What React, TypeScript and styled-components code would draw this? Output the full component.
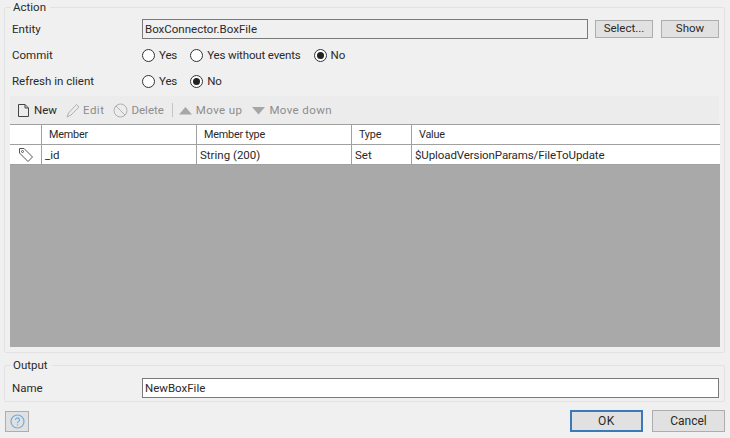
import React from 'react';
import styled, { createGlobalStyle } from 'styled-components';

const GlobalStyle = createGlobalStyle`
  html, body {
    margin: 0;
    padding: 0;
    background: #f0f0f0;
  }
  body {
    font-family: Roboto, 'Open Sans', 'Liberation Sans', sans-serif;
    font-size: 11.5px;
    color: #2a2a2a;
  }
`;

const Dialog = styled.div`
  width: 730px;
  height: 438px;
  box-sizing: border-box;
  padding: 0 5px 0 4px;
  display: flex;
  flex-direction: column;
  overflow: hidden;
`;

const Group = styled.fieldset<{ $height: number; $top: number }>`
  margin: ${(p) => p.$top}px 0 0;
  padding: 0 5px;
  height: ${(p) => p.$height}px;
  flex: none;
  box-sizing: border-box;
  border: 1px solid #e2e2e2;
  border-radius: 2px;
  min-width: 0;

  legend {
    margin-left: 1px;
    padding: 0 4px 0 2px;
    height: 14px;
    line-height: 14px;
  }
`;

const Row = styled.div<{ $height: number; $top?: number }>`
  display: flex;
  align-items: center;
  height: ${(p) => p.$height}px;
  margin-top: ${(p) => p.$top ?? 0}px;
`;

const Label = styled.div`
  width: 132px;
  flex: none;
  padding-left: 2px;
  box-sizing: border-box;
`;

const TextBox = styled.div<{ $readOnly?: boolean }>`
  flex: 1;
  height: 20px;
  box-sizing: border-box;
  border: 1px solid #7a7a7a;
  background: ${(p) => (p.$readOnly ? '#f0f0f0' : '#fff')};
  line-height: 18px;
  padding-left: 2px;
`;

const SmallButton = styled.div<{ $width: number; $gap: number }>`
  width: ${(p) => p.$width}px;
  margin-left: ${(p) => p.$gap}px;
  height: 18px;
  flex: none;
  box-sizing: border-box;
  border: 1px solid #adadad;
  background: #e1e1e1;
  text-align: center;
  line-height: 15px;
`;

const RadioRow = styled.div`
  display: flex;
  align-items: center;
  letter-spacing: -0.15px;
`;

const Radio = styled.span<{ $checked?: boolean; $gap: number }>`
  width: 13px;
  height: 13px;
  box-sizing: border-box;
  border: 1px solid #333;
  border-radius: 50%;
  background: #fff;
  margin-right: 4px;
  margin-left: ${(p) => p.$gap}px;
  display: flex;
  align-items: center;
  justify-content: center;

  &::after {
    content: '';
    width: 7px;
    height: 7px;
    border-radius: 50%;
    background: ${(p) => (p.$checked ? '#222' : 'transparent')};
  }
`;

const Toolbar = styled.div`
  height: 28px;
  margin-top: 2px;
  padding-left: 7px;
  background: #ececec;
  display: flex;
  align-items: center;
`;

const ToolItem = styled.div<{ $disabled?: boolean; $gap?: number; $iconGap?: number; $spacing?: number }>`
  display: flex;
  align-items: center;
  gap: ${(p) => p.$iconGap ?? 3}px;
  margin-left: ${(p) => p.$gap ?? 0}px;
  color: ${(p) => (p.$disabled ? '#8d8d8d' : '#2a2a2a')};
  letter-spacing: ${(p) => p.$spacing ?? 0}px;
`;

const ToolDivider = styled.span`
  width: 1px;
  height: 14px;
  background: #c4c4c4;
  margin: 0 5px 0 8px;
`;

const Grid = styled.div`
  height: 223px;
  width: 710px;
  box-sizing: border-box;
  border-top: 1px solid #a0a0a0;
  background: #a9a9a9;
  display: flex;
  flex-direction: column;
`;

const GridRow = styled.div<{ $height: number }>`
  display: grid;
  grid-template-columns: 32px 155px 155px 60px 1fr;
  height: ${(p) => p.$height}px;
  flex: none;
  background: #fff;
  border-bottom: 1px solid #a0a0a0;
  box-sizing: border-box;
`;

const Cell = styled.div`
  border-right: 1px solid #a0a0a0;
  padding-left: 3px;
  display: flex;
  align-items: center;
  white-space: nowrap;
  overflow: hidden;

  &:last-child {
    border-right: none;
  }
`;

const HeadCell = styled(Cell)`
  padding-left: 7px;
  font-size: 10.8px;
  letter-spacing: -0.2px;
`;

const ValueCell = styled(Cell)`
  letter-spacing: -0.1px;
`;

const IconCell = styled(Cell)`
  padding-left: 8px;
`;

const Footer = styled.div`
  display: flex;
  align-items: flex-start;
  margin-top: 8px;
  padding-left: 1px;
`;

const HelpButton = styled.div`
  width: 24px;
  height: 21px;
  margin-top: 1px;
  box-sizing: border-box;
  border: 1px solid #adadad;
  background: #e1e1e1;
  display: flex;
  align-items: center;
  justify-content: center;
`;

const Spacer = styled.div`
  flex: 1;
`;

const DialogButton = styled.div<{ $primary?: boolean; $width: number }>`
  width: ${(p) => p.$width}px;
  height: 22px;
  margin-left: 9px;
  box-sizing: border-box;
  border: ${(p) => (p.$primary ? '2px solid #3a7ab8' : '1px solid #adadad')};
  background: #e1e1e1;
  display: flex;
  align-items: center;
  justify-content: center;
  font-size: 12px;
  letter-spacing: ${(p) => (p.$primary ? '0.6px' : '0')};
`;

const NewIcon = () => (
  <svg width="13" height="15" viewBox="0 0 13 15" fill="none" stroke="#444" strokeWidth="1">
    <path d="M1.5 1.5h6.5l3.5 3.5v8.5h-10z" />
    <path d="M8 1.5V5h3.5" />
  </svg>
);

const EditIcon = () => (
  <svg width="14" height="15" viewBox="0 0 14 15" fill="none" stroke="#b0b0b0" strokeWidth="1">
    <path d="M1 14l1.5-4L10.5 1.5l2.5 2.5L5 12z" />
  </svg>
);

const DeleteIcon = () => (
  <svg width="15" height="15" viewBox="0 0 15 15" fill="none" stroke="#b0b0b0" strokeWidth="1">
    <circle cx="7.5" cy="7.5" r="6.5" />
    <path d="M3 3l9 9" />
  </svg>
);

const TriangleIcon = ({ down }: { down?: boolean }) => (
  <svg width="15" height="9" viewBox="0 0 15 9" fill="#a6a6a6">
    <path d={down ? 'M1 1h13L7.5 8.5z' : 'M1 8.5h13L7.5 1z'} />
  </svg>
);

const TagIcon = () => (
  <svg width="16" height="15" viewBox="0 0 16 15" fill="none" stroke="#555" strokeWidth="1">
    <path d="M1.5 1.5h4.5l8.5 8.5-4.5 4.5L1.5 6z" />
    <circle cx="4.5" cy="4.5" r="1" />
  </svg>
);

const HelpIcon = () => (
  <svg width="15" height="15" viewBox="0 0 15 15" fill="none">
    <circle cx="7.5" cy="7.5" r="6.5" stroke="#6aaee6" strokeWidth="1.2" />
    <path d="M5.5 6c0-3 4.2-2.6 4 0-.1 1.4-2 1.4-2 3.2" stroke="#6aaee6" strokeWidth="1.1" />
    <circle cx="7.5" cy="11" r=".7" fill="#6aaee6" />
  </svg>
);

const App = () => (
  <>
    <GlobalStyle />
    <Dialog>
      <Group $height={353} $top={0}>
        <legend>Action</legend>
        <Row $height={22} $top={4}>
          <Label>Entity</Label>
          <TextBox $readOnly>BoxConnector.BoxFile</TextBox>
          <SmallButton $width={58} $gap={7}>Select...</SmallButton>
          <SmallButton $width={58} $gap={8}>Show</SmallButton>
        </Row>
        <Row $height={26} $top={2}>
          <Label>Commit</Label>
          <RadioRow>
            <Radio $gap={0} />Yes
            <Radio $gap={13} />Yes without events
            <Radio $gap={13} $checked />No
          </RadioRow>
        </Row>
        <Row $height={26}>
          <Label>Refresh in client</Label>
          <RadioRow>
            <Radio $gap={0} />Yes
            <Radio $gap={13} $checked />No
          </RadioRow>
        </Row>
        <Toolbar>
          <ToolItem $iconGap={4}><NewIcon />New</ToolItem>
          <ToolItem $disabled $gap={9} $spacing={0.5}><EditIcon />Edit</ToolItem>
          <ToolItem $disabled $gap={9}><DeleteIcon />Delete</ToolItem>
          <ToolDivider />
          <ToolItem $disabled $spacing={0.4}><TriangleIcon />Move up</ToolItem>
          <ToolItem $disabled $gap={9} $spacing={0.4}><TriangleIcon down />Move down</ToolItem>
        </Toolbar>
        <Grid>
          <GridRow $height={20}>
            <Cell />
            <HeadCell>Member</HeadCell>
            <HeadCell>Member type</HeadCell>
            <HeadCell>Type</HeadCell>
            <HeadCell>Value</HeadCell>
          </GridRow>
          <GridRow $height={20}>
            <IconCell><TagIcon /></IconCell>
            <Cell>_id</Cell>
            <Cell>String (200)</Cell>
            <Cell>Set</Cell>
            <ValueCell>$UploadVersionParams/FileToUpdate</ValueCell>
          </GridRow>
        </Grid>
      </Group>
      <Group $height={44} $top={5}>
        <legend>Output</legend>
        <Row $height={24} $top={4}>
          <Label>Name</Label>
          <TextBox>NewBoxFile</TextBox>
        </Row>
      </Group>
      <Footer>
        <HelpButton><HelpIcon /></HelpButton>
        <Spacer />
        <DialogButton $primary $width={73}>OK</DialogButton>
        <DialogButton $width={73}>Cancel</DialogButton>
      </Footer>
    </Dialog>
  </>
);

export default App;
